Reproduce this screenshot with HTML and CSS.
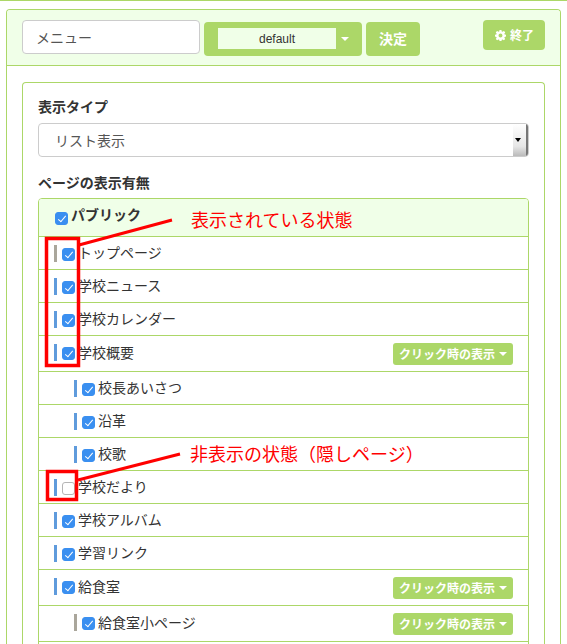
FILE: index.html
```html
<!DOCTYPE html>
<html lang="ja">
<head>
<meta charset="utf-8">
<title>メニュー</title>
<link rel="stylesheet" href="styles.css">
</head>
<body>
<div class="panel">
  <header class="head">
    <input class="name" type="text" value="メニュー">
    <div class="theme"><span class="theme-val">default</span><span class="caret"></span></div>
    <button class="btn ok">決定</button>
    <button class="btn end"><svg class="gear" viewBox="0 0 16 16"><path fill="#fff" fill-rule="evenodd" d="M6.600 0h2.800l.4 2.200 1.200.5L12.900 1.400l2 2-1.300 1.900.5 1.200 1.900.3v2.800l-1.900.4-.5 1.200 1.300 1.800-2 2-1.900-1.300-1.200.5-.4 2.200H6.600l-.4-2.200-1.200-.5-1.900 1.300-2-2 1.300-1.800-.5-1.200L0 9.600V6.800l1.900-.3.500-1.200L1.100 3.400l2-2L5 2.700l1.200-.5zM8 5.200a2.900 2.900 0 1 0 0 5.800 2.900 2.900 0 0 0 0-5.800z"/></svg>終了</button>
  </header>
  <main class="body">
    <section class="card">
      <h2 class="label">表示タイプ</h2>
      <div class="select"><span class="select-val">リスト表示</span><span class="select-arrow"></span></div>
      <h2 class="label second">ページの表示有無</h2>
      <ul class="list">
        <li class="row top"><input class="cb" type="checkbox" checked><strong>パブリック</strong></li>
        <li class="row"><i class="bar grey"></i><input class="cb" type="checkbox" checked><span class="txt">トップページ</span></li>
        <li class="row"><i class="bar"></i><input class="cb" type="checkbox" checked><span class="txt">学校ニュース</span></li>
        <li class="row"><i class="bar"></i><input class="cb" type="checkbox" checked><span class="txt">学校カレンダー</span></li>
        <li class="row tall"><i class="bar"></i><input class="cb" type="checkbox" checked><span class="txt">学校概要</span><span class="pop">クリック時の表示<span class="caret small"></span></span></li>
        <li class="row sub"><i class="bar"></i><input class="cb" type="checkbox" checked><span class="txt">校長あいさつ</span></li>
        <li class="row sub"><i class="bar"></i><input class="cb" type="checkbox" checked><span class="txt">沿革</span></li>
        <li class="row sub"><i class="bar"></i><input class="cb" type="checkbox" checked><span class="txt">校歌</span></li>
        <li class="row"><i class="bar"></i><input class="cb" type="checkbox"><span class="txt">学校だより</span></li>
        <li class="row"><i class="bar"></i><input class="cb" type="checkbox" checked><span class="txt">学校アルバム</span></li>
        <li class="row"><i class="bar"></i><input class="cb" type="checkbox" checked><span class="txt">学習リンク</span></li>
        <li class="row tall"><i class="bar"></i><input class="cb" type="checkbox" checked><span class="txt">給食室</span><span class="pop">クリック時の表示<span class="caret small"></span></span></li>
        <li class="row tall sub"><i class="bar grey"></i><input class="cb" type="checkbox" checked><span class="txt">給食室小ページ</span><span class="pop">クリック時の表示<span class="caret small"></span></span></li>
        <li class="row sub"></li>
      </ul>
    </section>
  </main>
</div>
<svg class="marks" viewBox="0 0 567 644">
  <g fill="none" stroke="#f00">
    <rect x="46.500" y="238.500" width="32" height="127" stroke-width="3.500"/>
    <rect x="47.500" y="471.500" width="29" height="28" stroke-width="3.500"/>
    <path d="M79 245 172 220M78 480 180 454" stroke-width="3"/>
  </g>
</svg>
<p class="note n1">表示されている状態</p>
<p class="note n2">非表示の状態（隠しページ）</p>
</body>
</html>
```
FILE: styles.css
```css
* { box-sizing: border-box; }
html, body { height: 644px; overflow: hidden; }
body {
  margin: 0;
  border-top: 1px solid #acd768;
  background: #fff;
  color: #333;
  font: 14px/20px "Noto Sans CJK JP", "Liberation Sans", sans-serif;
  position: relative;
}
.panel {
  height: 635px;
  margin: 8px 6px 0;
  border: 1px solid #acd768;
  border-bottom: 0;
  border-radius: 4px 4px 0 0;
  overflow: hidden;
}
.head {
  height: 56px;
  display: flex;
  align-items: flex-start;
  padding: 10px 15px 0;
  background: #f0ffe8;
  border-bottom: 1px solid #acd768;
}
.name {
  width: 178px;
  height: 34px;
  padding: 0 13px;
  border: 1px solid #ccc;
  border-radius: 4px;
  background: #fff;
  color: #555;
  font: inherit;
  margin: 0;
}
.theme {
  width: 158px;
  height: 34px;
  margin: 2px 0 0 4px;
  padding: 6px 0 0 14px;
  display: flex;
  align-items: flex-start;
  background: #acd768;
  border-radius: 4px;
}
.theme-val {
  width: 118px;
  height: 21px;
  background: #f0ffe8;
  text-align: center;
  font: 12px/23px "Liberation Sans", sans-serif;
  color: #333;
}
.caret {
  width: 0;
  height: 0;
  margin: 9px 0 0 5px;
  border: 4px solid transparent;
  border-top-color: #fff;
  border-bottom: 0;
}
.btn {
  border: 0;
  background: #acd768;
  color: #fff;
  border-radius: 4px;
  font: bold 12px/16px "Noto Sans CJK JP", sans-serif;
  padding: 0;
}
.ok {
  width: 54px;
  height: 34px;
  margin: 2px 0 0 4px;
  padding-bottom: 2px;
  font-size: 14px;
}
.end {
  width: 62px;
  height: 30px;
  margin-left: auto;
  padding-left: 1px;
}
.gear {
  width: 11px;
  height: 11px;
  margin-right: 4px;
  vertical-align: -1px;
}
.body { padding: 16px 15px 0; }
.card {
  height: 640px;
  border: 1px solid #acd768;
  border-bottom: 0;
  border-radius: 4px 4px 0 0;
  padding: 13px 15px 0;
}
.label {
  margin: 0;
  font-size: 14px;
  line-height: 20px;
  font-weight: 700;
  color: #333;
}
.second { margin-top: 15px; }
.select {
  height: 34px;
  margin-top: 7px;
  display: flex;
  border: 1px solid #ccc;
  border-radius: 4px;
  overflow: hidden;
  color: #555;
  line-height: 32px;
}
.select-val { flex: 1; padding-left: 16px; }
.select-arrow {
  width: 15px;
  position: relative;
  background: linear-gradient(#fff, #e6e6e6 70%, #bbb);
  border-right: 2px solid #777;
}
.select-arrow::after {
  content: "";
  position: absolute;
  left: 2px;
  top: 14px;
  border: 3.500px solid transparent;
  border-top: 4px solid #000;
  border-bottom: 0;
}
.list {
  list-style: none;
  margin: 6px 0 0;
  padding: 0;
  border: 1px solid #acd768;
  border-radius: 4px 4px 0 0;
}
.row {
  height: 33px;
  display: flex;
  align-items: center;
  padding: 0 15px;
  border-top: 1px solid #acd768;
  color: #333;
}
.txt { margin-bottom: 2px; }
.row.top {
  height: 37px;
  padding: 0 16px 1px;
  border-top: 0;
  background: #f0ffe8;
  border-radius: 3px 3px 0 0;
}
.row.top .cb { margin-right: 3px; }
.row.top strong { margin-top: -6px; color: #333; }
.row.tall { height: 36px; padding-bottom: 2px; }
.row.sub { padding-left: 35px; }
.bar {
  width: 3px;
  height: 17px;
  margin-right: 5px;
  background: #5f9bdc;
  flex: none;
}
.bar.grey { background: #aaa69b; }
.cb {
  appearance: none;
  -webkit-appearance: none;
  width: 13px;
  height: 13px;
  margin: 2px 3px 0 0;
  flex: none;
  position: relative;
  border: 1px solid #b5b5b5;
  border-radius: 3px;
  background: #fff;
}
.cb:checked {
  border-color: #3a8ff0;
  background: #3a8ff0;
}
.cb:checked::after {
  content: "";
  position: absolute;
  left: 3.500px;
  top: 1px;
  width: 3px;
  height: 7px;
  border: solid #fff;
  border-width: 0 1.500px 1.500px 0;
  transform: rotate(40deg);
}
.pop {
  margin: 0 0 -2px auto;
  height: 22px;
  width: 120px;
  display: flex;
  align-items: center;
  justify-content: center;
  background: #acd768;
  color: #fff;
  border-radius: 3px;
  font-size: 12px;
  font-weight: 700;
}
.caret.small { margin: 1px 0 0 4px; border-width: 4px; border-bottom: 0; }
.marks {
  position: absolute;
  left: 0;
  top: -1px;
  width: 567px;
  height: 644px;
}
.note {
  position: absolute;
  margin: 0;
  color: #f00;
  font-size: 18px;
  line-height: 24px;
  white-space: nowrap;
}
.n1 { left: 191px; top: 206px; }
.n2 { left: 190px; top: 440px; }
```
